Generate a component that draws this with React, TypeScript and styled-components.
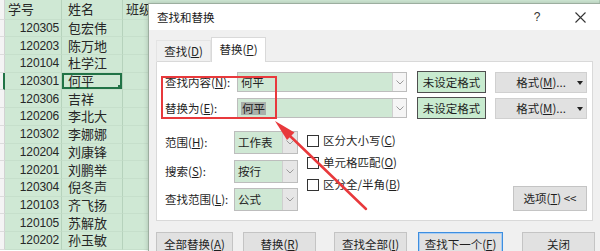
import React from "react";
import styled, { createGlobalStyle } from "styled-components";

const GlobalStyle = createGlobalStyle`
  html, body { margin: 0; padding: 0; }
  body {
    width: 600px; height: 251px; overflow: hidden; background: #fff;
    font-family: "Noto Sans CJK SC", "Liberation Sans", sans-serif;
  }
  * { box-sizing: border-box; }
`;

const GREEN = "#cfe8d4";

const Stage = styled.div`
  position: relative;
  width: 600px;
  height: 251px;
  overflow: hidden;
`;

/* ---------- spreadsheet ---------- */
const Sheet = styled.div`
  display: flex;
  flex-direction: column;
  width: 600px;
`;
const SheetRow = styled.div<{ $h: number }>`
  display: flex;
  flex: none;
  height: ${(p) => p.$h}px;
`;
const RowHead = styled.div<{ $active?: boolean }>`
  width: 5px;
  flex: none;
  background: #f4f4f4;
  border-bottom: 1px solid #dcdcdc;
  border-right: ${(p) => (p.$active ? "2px solid #217346" : "1px solid #d2d2d2")};
`;
const Cell = styled.div<{ $w?: number; $right?: boolean; $active?: boolean }>`
  position: relative;
  width: ${(p) => (p.$w ? `${p.$w}px` : "auto")};
  flex: ${(p) => (p.$w ? "none" : "1")};
  background: ${GREEN};
  border-right: 1px solid #b6d2bc;
  border-bottom: 1px solid #c6dfcb;
  display: flex;
  align-items: center;
  justify-content: ${(p) => (p.$right ? "flex-end" : "flex-start")};
  padding: 0 2px 0 3px;
  font-size: 13px;
  line-height: 16px;
  color: #262626;
  white-space: nowrap;
  box-shadow: ${(p) => (p.$active ? "inset 0 0 0 2px #217346" : "none")};
`;
const NumText = styled.span`
  font-family: "Liberation Sans", sans-serif;
  font-size: 12px;
  letter-spacing: -0.15px;
`;
const FillHandle = styled.span`
  position: absolute;
  right: 0;
  bottom: 0;
  width: 4px;
  height: 4px;
  background: #217346;
`;

/* ---------- dialog ---------- */
const Dialog = styled.div`
  position: absolute;
  left: 148px;
  top: 3px;
  width: 460px;
  height: 262px;
  background: #f0f0f0;
  border: 1px solid #9cae9f;
  box-shadow: 0 0 5px rgba(0, 0, 0, 0.18);
  display: flex;
  flex-direction: column;
  font-size: 11.5px;
  line-height: 15px;
  color: #1f1f1f;
`;
const TitleBar = styled.div`
  height: 26px;
  flex: none;
  background: #fff;
  display: flex;
  align-items: center;
  padding: 0 15px 0 8px;
`;
const Title = styled.span`
  font-size: 11.5px;
  color: #1a1a1a;
  flex: 1;
`;
const TitleBtn = styled.span<{ $gap?: number }>`
  width: 24px;
  height: 20px;
  display: flex;
  align-items: center;
  justify-content: center;
  margin-left: ${(p) => p.$gap ?? 0}px;
  font-family: "Liberation Sans", sans-serif;
  font-size: 12px;
  color: #333;
`;
const Body = styled.div`
  flex: 1;
  display: flex;
  flex-direction: column;
  padding: 8px 7px 0 7px;
`;
const TabRow = styled.div`
  display: flex;
  align-items: flex-end;
  height: 24px;
  margin-bottom: -1px;
  position: relative;
  z-index: 1;
`;
const Tab = styled.div<{ $active?: boolean }>`
  width: 55px;
  height: ${(p) => (p.$active ? 25 : 22)}px;
  display: flex;
  align-items: center;
  justify-content: center;
  background: ${(p) => (p.$active ? "#fff" : "transparent")};
  border: 1px solid ${(p) => (p.$active ? "#d9d9d9" : "#e4e4e4")};
  border-bottom: none;
  padding-bottom: ${(p) => (p.$active ? 2 : 0)}px;
`;
const Panel = styled.div`
  width: 437px;
  height: 160px;
  background: #fff;
  border: 1px solid #d9d9d9;
  padding: 9px 5px 9px 8px;
  display: flex;
  flex-direction: column;
`;
const FieldRow = styled.div<{ $mb?: number }>`
  display: flex;
  align-items: center;
  height: 22px;
  margin-bottom: ${(p) => p.$mb ?? 0}px;
`;
const Label = styled.span<{ $w: number }>`
  width: ${(p) => p.$w}px;
  flex: none;
  white-space: nowrap;
`;
const Combo = styled.div<{ $w: number; $h: number }>`
  width: ${(p) => p.$w}px;
  height: ${(p) => p.$h}px;
  flex: none;
  display: flex;
  border: 1px solid #bdbdbd;
`;
const ComboText = styled.div`
  flex: 1;
  background: ${GREEN};
  display: flex;
  align-items: center;
  padding-left: 3px;
  color: #222;
`;
const Selected = styled.span`
  background: #a9b0aa;
  padding: 0 1px;
  line-height: 13px;
`;
const DropPart = styled.div<{ $w: number; $bg: string }>`
  width: ${(p) => p.$w}px;
  flex: none;
  background: ${(p) => p.$bg};
  border-left: 1px solid #cfcfcf;
  display: flex;
  align-items: center;
  justify-content: center;
`;
const FormatState = styled.div`
  width: 69px;
  height: 22px;
  flex: none;
  margin-left: 10px;
  background: #c8ebcf;
  border: 1px solid #4f4f4f;
  display: flex;
  align-items: center;
  justify-content: center;
`;
const FormatBtn = styled.div`
  position: relative;
  width: 92px;
  height: 21px;
  flex: none;
  margin-left: 9px;
  background: #e1e1e1;
  border: 1px solid #d0d0d0;
  display: flex;
  align-items: center;
  justify-content: center;
`;
const Caret = styled.span`
  position: absolute;
  right: 3px;
  top: 8px;
  width: 0;
  height: 0;
  border-left: 3px solid transparent;
  border-right: 3px solid transparent;
  border-top: 4px solid #222;
`;
const Lower = styled.div`
  display: flex;
  margin-top: 12px;
`;
const OptCol = styled.div`
  display: flex;
  flex-direction: column;
  gap: 5.5px;
`;
const OptRow = styled.div`
  display: flex;
  align-items: center;
  height: 23px;
`;
const CheckCol = styled.div`
  display: flex;
  flex-direction: column;
  margin-left: 9px;
  margin-top: -1.5px;
`;
const CheckRow = styled.label`
  display: flex;
  align-items: center;
  height: 22px;
  white-space: nowrap;
`;
const Box = styled.span`
  width: 12px;
  height: 12px;
  border: 1px solid #333;
  background: #fff;
  margin-right: 4px;
  flex: none;
`;
const RightCol = styled.div`
  flex: 1;
  display: flex;
  justify-content: flex-end;
  align-items: flex-end;
`;
const Btn = styled.div<{ $w: number; $h?: number; $ml?: number; $primary?: boolean }>`
  width: ${(p) => p.$w}px;
  height: ${(p) => p.$h ?? 24}px;
  flex: none;
  margin-left: ${(p) => p.$ml ?? 0}px;
  background: #e1e1e1;
  border: 1px solid ${(p) => (p.$primary ? "#3d8ee0" : "#c4c4c4")};
  box-shadow: ${(p) => (p.$primary ? "inset 0 0 0 1px #a9cdf2" : "none")};
  display: flex;
  align-items: center;
  justify-content: center;
  white-space: nowrap;
`;
const BtnRow = styled.div`
  display: flex;
  margin-top: 11px;
`;

/* ---------- annotations ---------- */
const RedRect = styled.div`
  position: absolute;
  left: 161px;
  top: 76px;
  width: 116px;
  height: 43px;
  border: 2px solid #e8393c;
  pointer-events: none;
`;
const Overlay = styled.svg`
  position: absolute;
  left: 0;
  top: 0;
  pointer-events: none;
`;

const Chevron = ({ color = "#9a9a9a" }: { color?: string }) => (
  <svg width="8" height="5" viewBox="0 0 8 5">
    <path d="M0.5 0.5 L4 4 L7.5 0.5" fill="none" stroke={color} strokeWidth="1" />
  </svg>
);

const rows: [string, string][] = [
  ["120305", "包宏伟"],
  ["120203", "陈万地"],
  ["120104", "杜学江"],
  ["120301", "何平"],
  ["120306", "吉祥"],
  ["120206", "李北大"],
  ["120302", "李娜娜"],
  ["120204", "刘康锋"],
  ["120201", "刘鹏举"],
  ["120304", "倪冬声"],
  ["120103", "齐飞扬"],
  ["120105", "苏解放"],
  ["120202", "孙玉敏"],
];

export default function App() {
  return (
    <Stage>
      <GlobalStyle />
      <Sheet>
        <SheetRow $h={19.5}>
          <RowHead />
          <Cell $w={57}>学号</Cell>
          <Cell $w={61}>&nbsp;姓名</Cell>
          <Cell>班级</Cell>
        </SheetRow>
        {rows.map(([id, name], i) => (
          <SheetRow $h={17.72} key={id}>
            <RowHead $active={i === 3} />
            <Cell $w={57} $right>
              <NumText>{id}</NumText>
            </Cell>
            <Cell $w={61} $active={i === 3}>
              &nbsp;{name}
              {i === 3 && <FillHandle />}
            </Cell>
            <Cell />
          </SheetRow>
        ))}
      </Sheet>

      <Dialog>
        <TitleBar>
          <Title>查找和替换</Title>
          <TitleBtn>?</TitleBtn>
          <TitleBtn $gap={19}>
            <svg width="11" height="11" viewBox="0 0 11 11">
              <path d="M0.5 0.5 L10.5 10.5 M10.5 0.5 L0.5 10.5" stroke="#333" strokeWidth="1.1" />
            </svg>
          </TitleBtn>
        </TitleBar>
        <Body>
          <TabRow>
            <Tab>
              查找(<u>D</u>)
            </Tab>
            <Tab $active>
              替换(<u>P</u>)
            </Tab>
          </TabRow>
          <Panel>
            <FieldRow $mb={4}>
              <Label $w={72}>
                查找内容(<u>N</u>):
              </Label>
              <Combo $w={170} $h={20}>
                <ComboText>何平</ComboText>
                <DropPart $w={14} $bg="#f5f5f5">
                  <Chevron />
                </DropPart>
              </Combo>
              <FormatState>未设定格式</FormatState>
              <FormatBtn>
                格式(<u>M</u>)...
                <Caret />
              </FormatBtn>
            </FieldRow>
            <FieldRow>
              <Label $w={72}>
                替换为(<u>E</u>):
              </Label>
              <Combo $w={170} $h={20}>
                <ComboText>
                  <Selected>何平</Selected>
                </ComboText>
                <DropPart $w={14} $bg="#f5f5f5">
                  <Chevron />
                </DropPart>
              </Combo>
              <FormatState>未设定格式</FormatState>
              <FormatBtn>
                格式(<u>M</u>)...
                <Caret />
              </FormatBtn>
            </FieldRow>
            <Lower>
              <OptCol>
                <OptRow>
                  <Label $w={69}>
                    范围(<u>H</u>):
                  </Label>
                  <Combo $w={64} $h={23}>
                    <ComboText>工作表</ComboText>
                    <DropPart $w={15} $bg="#e6e6e6">
                      <Chevron />
                    </DropPart>
                  </Combo>
                </OptRow>
                <OptRow>
                  <Label $w={69}>
                    搜索(<u>S</u>):
                  </Label>
                  <Combo $w={64} $h={23}>
                    <ComboText>按行</ComboText>
                    <DropPart $w={15} $bg="#e6e6e6">
                      <Chevron />
                    </DropPart>
                  </Combo>
                </OptRow>
                <OptRow>
                  <Label $w={69}>
                    查找范围(<u>L</u>):
                  </Label>
                  <Combo $w={64} $h={23}>
                    <ComboText>公式</ComboText>
                    <DropPart $w={15} $bg="#e6e6e6">
                      <Chevron />
                    </DropPart>
                  </Combo>
                </OptRow>
              </OptCol>
              <CheckCol>
                <CheckRow>
                  <Box />
                  区分大小写(<u>C</u>)
                </CheckRow>
                <CheckRow>
                  <Box />
                  单元格匹配(<u>O</u>)
                </CheckRow>
                <CheckRow>
                  <Box />
                  区分全/半角(<u>B</u>)
                </CheckRow>
              </CheckCol>
              <RightCol>
                <Btn $w={74} $h={25}>
                  选项(<u>T</u>)&nbsp;&lt;&lt;
                </Btn>
              </RightCol>
            </Lower>
          </Panel>
          <BtnRow>
            <Btn $w={77}>
              全部替换(<u>A</u>)
            </Btn>
            <Btn $w={73} $ml={10}>
              替换(<u>R</u>)
            </Btn>
            <Btn $w={73} $ml={18}>
              查找全部(<u>I</u>)
            </Btn>
            <Btn $w={85} $ml={11} $primary>
              查找下一个(<u>F</u>)
            </Btn>
            <Btn $w={73} $ml={19}>
              关闭
            </Btn>
          </BtnRow>
        </Body>
      </Dialog>

      <RedRect />
      <Overlay width="600" height="251" viewBox="0 0 600 251">
        <line x1="366" y1="209" x2="289" y2="135" stroke="#e8393c" strokeWidth="2.5" strokeLinecap="round" />
        <polygon points="275,121 294.5,132.5 287,140" fill="#e8393c" />
      </Overlay>
    </Stage>
  );
}
